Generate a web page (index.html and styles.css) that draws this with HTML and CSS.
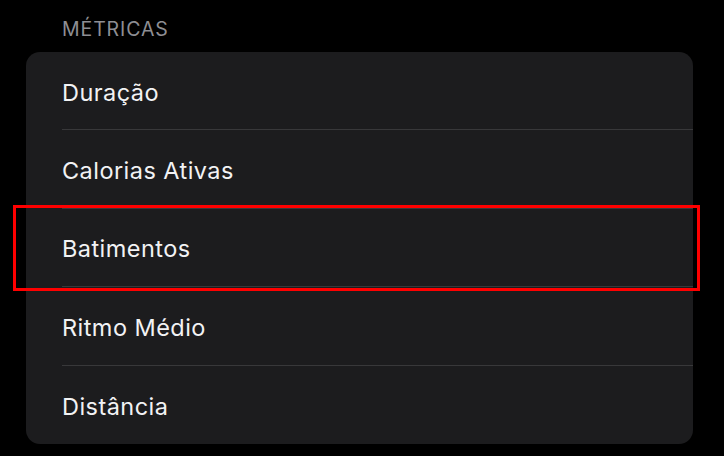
FILE: index.html
```html
<!DOCTYPE html>
<html lang="pt">
<head>
<meta charset="utf-8">
<link rel="stylesheet" href="styles.css">
</head>
<body>
<div class="section">
  <div class="header">MÉTRICAS</div>
  <div class="card">
    <div class="row"><span class="label">Duração</span></div>
    <div class="row"><span class="label">Calorias Ativas</span></div>
    <div class="row highlighted"><span class="label">Batimentos</span><div class="mark"></div></div>
    <div class="row"><span class="label">Ritmo Médio</span></div>
    <div class="row last"><span class="label">Distância</span></div>
  </div>
</div>
</body>
</html>
```
FILE: styles.css
```css
html, body {
  margin: 0;
  padding: 0;
  background: #000;
  width: 724px;
  height: 456px;
  overflow: hidden;
  font-family: Inter, "Noto Sans", sans-serif;
}
.section {
  padding: 16px 31px 0 26px;
}
.header {
  padding-left: 36px;
  height: 36px;
  font-size: 19.5px;
  line-height: 27px;
  color: #8e8e93;
  letter-spacing: 0.9px;
}
.card {
  background: #1c1c1e;
  border-radius: 14px;
  overflow: visible;
}
.row {
  position: relative;
  height: 78.4px;
  margin-left: 36px;
  box-sizing: border-box;
  border-bottom: 1px solid #38383a;
  display: flex;
  align-items: center;
}
.row.last {
  border-bottom: none;
}
.label {
  font-size: 23.5px;
  font-weight: 400;
  color: #f2f2f4;
  letter-spacing: 0.45px;
  padding-top: 3px;
}
.mark {
  position: absolute;
  left: -49px;
  top: -4px;
  width: 687px;
  height: 86px;
  box-sizing: border-box;
  border: 3px solid #ff0000;
  pointer-events: none;
}
```
